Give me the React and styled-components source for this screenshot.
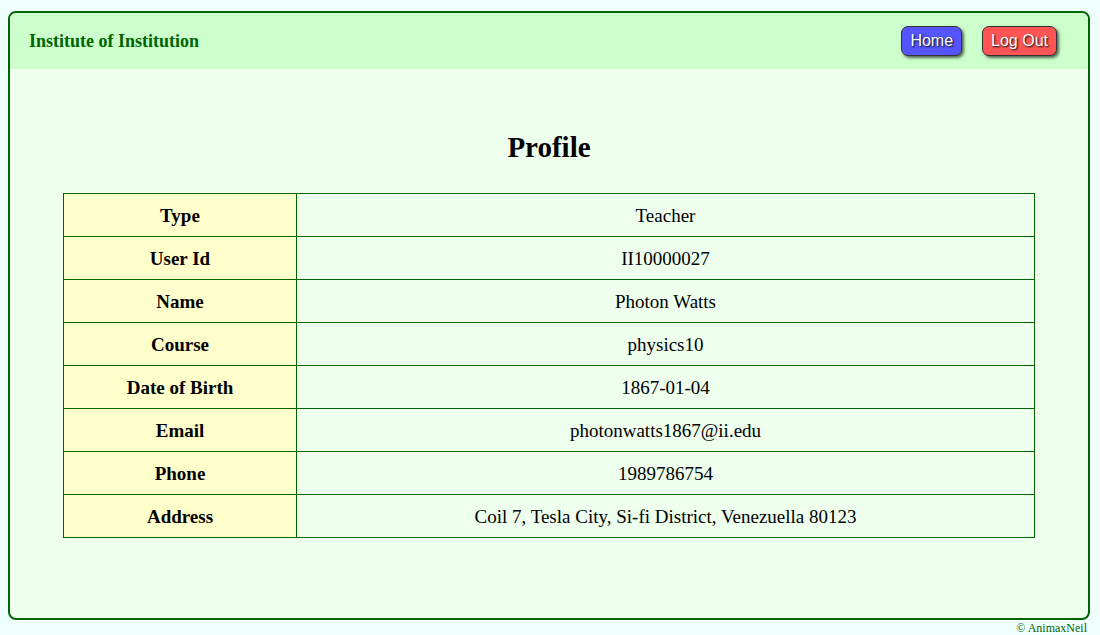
import React from "react";
import styled, { createGlobalStyle } from "styled-components";

const GlobalStyle = createGlobalStyle`
  html, body {
    margin: 0;
    padding: 0;
    background: #f0ffff;
  }
  body {
    font-family: "Liberation Serif", "Times New Roman", serif;
  }
`;

const Page = styled.div`
  padding: 11px 10px 0 8px;
`;

const Card = styled.div`
  border: 2px solid #006400;
  border-radius: 8px;
  overflow: hidden;
  background: #eeffee;
  height: 609px;
  box-sizing: border-box;
  display: flex;
  flex-direction: column;
`;

const Header = styled.header`
  background: #ccffcc;
  height: 56px;
  display: flex;
  align-items: center;
  justify-content: space-between;
  padding: 0 31px 0 19px;
`;

const Brand = styled.div`
  color: #006400;
  font-weight: bold;
  font-size: 18px;
`;

const Nav = styled.nav`
  display: flex;
  gap: 20px;
`;

const NavButton = styled.button`
  font-family: "Liberation Sans", Arial, sans-serif;
  font-size: 16px;
  color: #fff;
  text-shadow: 1px 1px 2px #000;
  background: ${(p) => p.$bg};
  border: 1px solid #333;
  border-radius: 7px;
  height: 30px;
  padding: 0 8px;
  box-shadow: 2px 2px 3px rgba(0, 0, 0, 0.6);
  cursor: pointer;
`;

const Main = styled.main`
  flex: 1;
  padding: 0 53px;
`;

const Title = styled.h2`
  text-align: center;
  font-size: 29px;
  font-weight: bold;
  margin: 62px 0 30px;
  line-height: 32px;
`;

const Table = styled.table`
  width: 100%;
  border-collapse: collapse;
  font-size: 19px;
`;

const Label = styled.th`
  width: 232px;
  background: #ffffcc;
  border: 1px solid #006400;
  height: 40px;
  padding: 2px 0 0;
  text-align: center;
`;

const Value = styled.td`
  border: 1px solid #006400;
  height: 40px;
  padding: 2px 0 0;
  text-align: center;
`;

const Footer = styled.footer`
  text-align: right;
  color: #006400;
  font-size: 12px;
  padding: 1px 3px 0 0;
`;

const rows = [
  ["Type", "Teacher"],
  ["User Id", "II10000027"],
  ["Name", "Photon Watts"],
  ["Course", "physics10"],
  ["Date of Birth", "1867-01-04"],
  ["Email", "photonwatts1867@ii.edu"],
  ["Phone", "1989786754"],
  ["Address", "Coil 7, Tesla City, Si-fi District, Venezuella 80123"],
];

export default function App() {
  return (
    <>
      <GlobalStyle />
      <Page>
        <Card>
          <Header>
            <Brand>Institute of Institution</Brand>
            <Nav>
              <NavButton $bg="#5555ff">Home</NavButton>
              <NavButton $bg="#ff5555">Log Out</NavButton>
            </Nav>
          </Header>
          <Main>
            <Title>Profile</Title>
            <Table>
              <tbody>
                {rows.map(([k, v]) => (
                  <tr key={k}>
                    <Label>{k}</Label>
                    <Value>{v}</Value>
                  </tr>
                ))}
              </tbody>
            </Table>
          </Main>
        </Card>
        <Footer>© AnimaxNeil</Footer>
      </Page>
    </>
  );
}
